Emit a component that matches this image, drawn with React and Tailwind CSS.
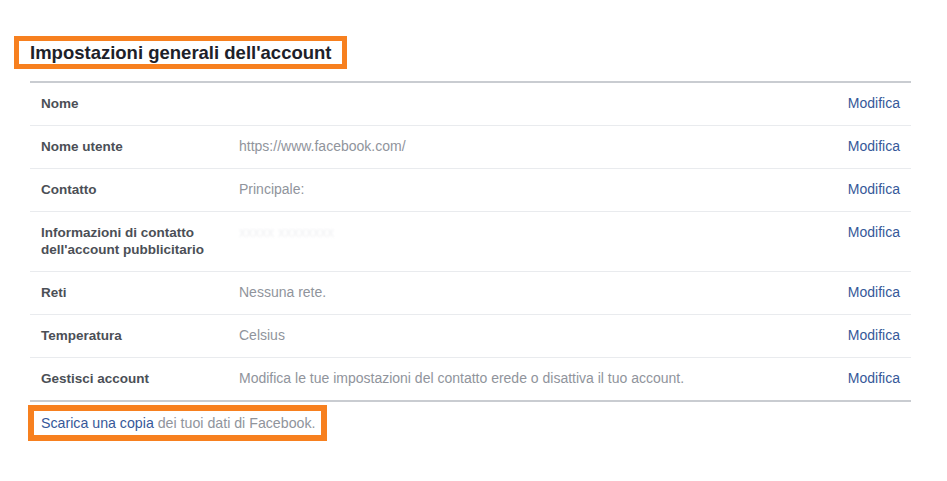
const rows = [
  { label: "Nome", value: "" },
  { label: "Nome utente", value: "https://www.facebook.com/" },
  { label: "Contatto", value: "Principale:" },
  { label: "Informazioni di contatto dell'account pubblicitario", value: "", blurred: true },
  { label: "Reti", value: "Nessuna rete." },
  { label: "Temperatura", value: "Celsius" },
  { label: "Gestisci account", value: "Modifica le tue impostazioni del contatto erede o disattiva il tuo account." },
];

function SettingRow({ row, last }) {
  return (
    <div
      className={
        "grid grid-cols-[198px_1fr_auto] items-start px-[11px] pt-[12px] pb-[13px] " +
        (last ? "border-b-2 border-[#c9ccd1]" : "border-b border-[#e9ebee]")
      }
    >
      <div className="text-[13.5px] font-bold leading-[17px] text-[#4b4f56] pr-[30px]">{row.label}</div>
      <div className="text-[14px] leading-[17px] text-[#90949c]">
        {row.blurred ? (
          <span className="text-[#f0f1f3] blur-[1px]">xxxxx xxxxxxxx</span>
        ) : (
          row.value
        )}
      </div>
      <a className="text-[14px] leading-[17px] text-[#365899] cursor-pointer">Modifica</a>
    </div>
  );
}

export default function App() {
  return (
    <div className="min-h-[481px] w-[947px] bg-white font-['Liberation_Sans',Arial,sans-serif] pt-[36px]">
      <div className="ml-[14px] w-fit border-[5px] border-[#f7801f] pl-[11px] pr-[11px]">
        <h2 className="text-[18.5px] font-bold leading-[23px] text-[#1d2129]">Impostazioni generali dell'account</h2>
      </div>

      <div className="ml-[30px] mt-[12px] w-[881px] border-t-2 border-[#c9ccd1]">
        {rows.map((r, i) => (
          <SettingRow key={r.label} row={r} last={i === rows.length - 1} />
        ))}
      </div>

      <div className="ml-[28px] mt-[3px] w-fit border-[6px] border-[#f7801f] pl-[7px] pr-[6px]">
        <p className="text-[14.2px] leading-[24px] text-[#90949c]">
          <a className="text-[#365899] cursor-pointer">Scarica una copia</a> dei tuoi dati di Facebook.
        </p>
      </div>
    </div>
  );
}
